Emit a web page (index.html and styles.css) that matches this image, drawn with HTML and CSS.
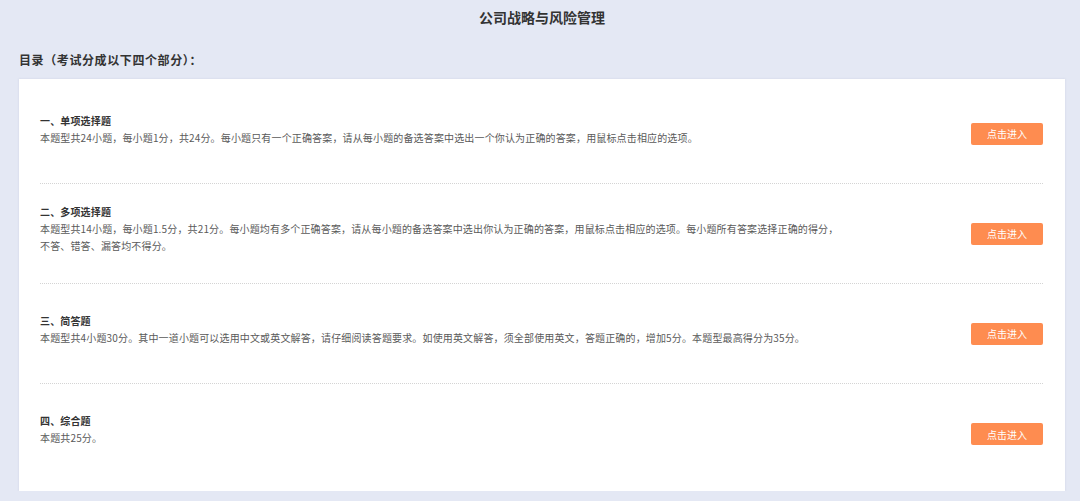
FILE: index.html
```html
<!DOCTYPE html>
<html lang="zh-CN">
<head>
<meta charset="utf-8">
<title>公司战略与风险管理</title>
<link rel="stylesheet" href="styles.css">
</head>
<body>
<div class="page">
  <h1 class="page-title">公司战略与风险管理</h1>
  <div class="toc-label">目录（考试分成以下四个部分）：</div>
  <div class="card">
    <div class="row">
      <div class="info">
        <div class="row-title">一、单项选择题</div>
        <div class="row-desc">本题型共24小题，每小题1分，共24分。每小题只有一个正确答案，请从每小题的备选答案中选出一个你认为正确的答案，用鼠标点击相应的选项。</div>
      </div>
      <a class="btn">点击进入</a>
    </div>
    <div class="row">
      <div class="info">
        <div class="row-title">二、多项选择题</div>
        <div class="row-desc">本题型共14小题，每小题1.5分，共21分。每小题均有多个正确答案，请从每小题的备选答案中选出你认为正确的答案，用鼠标点击相应的选项。每小题所有答案选择正确的得分，<br>不答、错答、漏答均不得分。</div>
      </div>
      <a class="btn">点击进入</a>
    </div>
    <div class="row">
      <div class="info">
        <div class="row-title">三、简答题</div>
        <div class="row-desc">本题型共4小题30分。其中一道小题可以选用中文或英文解答，请仔细阅读答题要求。如使用英文解答，须全部使用英文，答题正确的，增加5分。本题型最高得分为35分。</div>
      </div>
      <a class="btn">点击进入</a>
    </div>
    <div class="row">
      <div class="info">
        <div class="row-title">四、综合题</div>
        <div class="row-desc">本题共25分。</div>
      </div>
      <a class="btn">点击进入</a>
    </div>
  </div>
</div>
</body>
</html>
```

FILE: styles.css
```css
html, body {
  margin: 0;
  padding: 0;
  background: #e4e8f4;
}
body {
  font-family: "Noto Sans CJK SC", "Noto Sans", "Liberation Sans", sans-serif;
  color: #333;
}
.page {
  padding: 0 15px 0 19px;
}
.page-title {
  margin: 0;
  padding-top: 7px;
  font-size: 14px;
  line-height: 20px;
  font-weight: bold;
  text-align: center;
  color: #333;
}
.toc-label {
  margin-top: 23px;
  font-size: 12px;
  line-height: 20px;
  font-weight: bold;
  letter-spacing: 0.6px;
  color: #333;
}
.card {
  margin-top: 9px;
  background: #fff;
  padding: 5px 22px 7px 21px;
  box-shadow: 0 0 2px rgba(160, 170, 200, 0.35);
}
.row {
  height: 100px;
  display: flex;
  align-items: center;
  justify-content: space-between;
  box-sizing: border-box;
  border-bottom: 1px dotted #d4d4d4;
}
.row:last-child {
  border-bottom: none;
}
.info {
  padding-bottom: 10px;
}
.row-title {
  font-size: 10px;
  line-height: 17px;
  font-weight: bold;
  letter-spacing: 0.15px;
  color: #333;
}
.row-desc {
  font-size: 10px;
  line-height: 17px;
  letter-spacing: 0.15px;
  color: #5a5a5a;
}
.btn {
  display: flex;
  align-items: center;
  justify-content: center;
  width: 72px;
  height: 22px;
  border-radius: 2px;
  background: #fe8c50;
  color: #fff;
  font-size: 10px;
  cursor: pointer;
}
```
